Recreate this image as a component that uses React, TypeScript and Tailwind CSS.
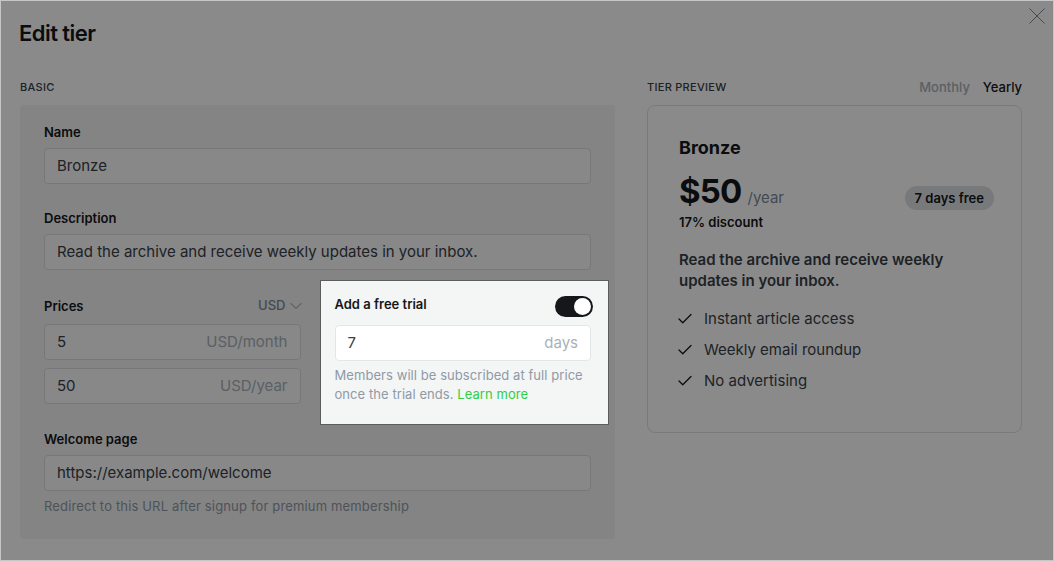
import React from "react";
import { Check, ChevronDown } from "lucide-react";

const Label = ({ children }: { children: React.ReactNode }) => (
  <div className="text-[13px] font-semibold leading-[16px] text-[#15171a]">{children}</div>
);

const Field = ({ value, suffix, light }: { value: string; suffix?: string; light?: boolean }) => (
  <div
    className={`flex h-[36px] items-center justify-between rounded-[4px] border px-[12px] text-[15px] ${
      light ? "border-[#e3e6e9] bg-white" : "border-[#dcdddf] bg-[#fbfbfb]"
    }`}
  >
    <span className="text-[#394047]">{value}</span>
    {suffix && <span className="text-[#a9b1b9]">{suffix}</span>}
  </div>
);

const features = ["Instant article access", "Weekly email roundup", "No advertising"];

export default function App() {
  return (
    <div className="relative h-[561px] w-[1054px] overflow-hidden border border-[#c4c6c8] bg-white font-['Inter',sans-serif] text-[#15171a]">
      <div className="flex items-start justify-between pl-[18px] pr-[8px] pt-[16px]">
        <h1 className="text-[22px] font-semibold leading-[32px] tracking-tight">Edit tier</h1>
        <svg width="16" height="16" viewBox="0 0 16 16" className="-mt-[9px] text-[#7c8b9a]">
          <path d="M0.5 0.5L15.5 15.5M15.5 0.5L0.5 15.5" stroke="currentColor" strokeWidth="1" />
        </svg>
      </div>

      <div className="mt-[30px] flex gap-[32px] pl-[19px]">
        {/* basic */}
        <section className="w-[595px]">
          <div className="mb-[10px] text-[11px] font-medium uppercase leading-[16px] tracking-wide text-[#394047]">Basic</div>
          <div className="flex flex-col gap-[26px] rounded-[4px] bg-[#f4f4f4] px-[24px] pb-[24px] pt-[19px]">
            <div className="flex flex-col gap-[8px]">
              <Label>Name</Label>
              <Field value="Bronze" />
            </div>
            <div className="flex flex-col gap-[8px]">
              <Label>Description</Label>
              <Field value="Read the archive and receive weekly updates in your inbox." />
            </div>

            <div className="grid grid-cols-2 gap-[34px]">
              <div className="flex flex-col gap-[8px]">
                <div className="flex h-[20px] items-center justify-between">
                  <Label>Prices</Label>
                  <div className="flex items-center text-[13px] font-medium text-[#7c8b9a]">
                    USD
                    <ChevronDown size={20} strokeWidth={1.2} className="-mr-[5px]" />
                  </div>
                </div>
                <Field value="5" suffix="USD/month" />
                <Field value="50" suffix="USD/year" />
              </div>

              <div className="relative z-20 -mb-[20px] -ml-[14px] -mr-[17px] -mt-[15px] bg-[#f4f5f5] pb-[20px] pl-[14px] pr-[17px] pt-[15px] ring-1 ring-black/30">
                <div className="flex items-start justify-between">
                  <Label>Add a free trial</Label>
                  <div className="-mr-[2px] flex h-[21px] w-[38px] items-center justify-end rounded-full bg-[#15171a] pr-[2px]">
                    <div className="h-[17px] w-[17px] rounded-full bg-white" />
                  </div>
                </div>
                <div className="mt-[8px]">
                  <Field value="7" suffix="days" light />
                </div>
                <div className="mt-[5px] text-[13px] leading-[19px] tracking-[0.005em] text-[#8e9aa6]">
                  <div>Members will be subscribed at full price</div>
                  <div>
                    once the trial ends. <span className="text-[#30cf43]">Learn more</span>
                  </div>
                </div>
              </div>
            </div>

            <div className="mt-[1px] flex flex-col gap-[8px]">
              <Label>Welcome page</Label>
              <Field value="https://example.com/welcome" />
              <p className="-mt-[2px] text-[13px] leading-[18px] tracking-[0.012em] text-[#8e9aa6]">
                Redirect to this URL after signup for premium membership
              </p>
            </div>
          </div>
        </section>

        {/* preview */}
        <section className="w-[375px]">
          <div className="mb-[10px] flex items-center justify-between leading-[16px]">
            <span className="text-[11px] font-medium uppercase tracking-wide text-[#394047]">Tier preview</span>
            <div className="flex gap-[13px] text-[13px] font-medium">
              <span className="text-[#a9b1b9]">Monthly</span>
              <span className="text-[#15171a]">Yearly</span>
            </div>
          </div>
          <div className="rounded-[8px] border border-[#dfe2e5] bg-white pb-[41px] pl-[31px] pr-[27px] pt-[30px]">
            <div className="text-[18px] font-bold leading-[24px]">Bronze</div>
            <div className="mt-[11px] flex items-end justify-between">
              <div className="flex items-baseline gap-[6px]">
                <span className="text-[33px] font-bold leading-[40px] tracking-tight">$50</span>
                <span className="text-[15px] text-[#7c8b9a]">/year</span>
              </div>
              <span className="mb-[1px] rounded-full bg-[#dcdfe2] px-[10px] text-[13px] font-semibold leading-[24px] text-[#15171a]">
                7 days free
              </span>
            </div>
            <div className="mt-[2px] text-[13px] font-semibold leading-[18px]">17% discount</div>
            <p className="mt-[18px] text-[15px] font-semibold leading-[21px] text-[#394047]">
              Read the archive and receive weekly updates in your inbox.
            </p>
            <ul className="mt-[17px] flex flex-col gap-[10px]">
              {features.map(f => (
                <li key={f} className="flex items-center gap-[10px] text-[15px] leading-[21px] text-[#394047]">
                  <Check size={18} strokeWidth={1.75} className="-ml-[3px] text-[#15171a]" />
                  {f}
                </li>
              ))}
            </ul>
          </div>
        </section>
      </div>

      <div className="pointer-events-none absolute inset-0 z-10 bg-black/[0.46]" />
    </div>
  );
}
